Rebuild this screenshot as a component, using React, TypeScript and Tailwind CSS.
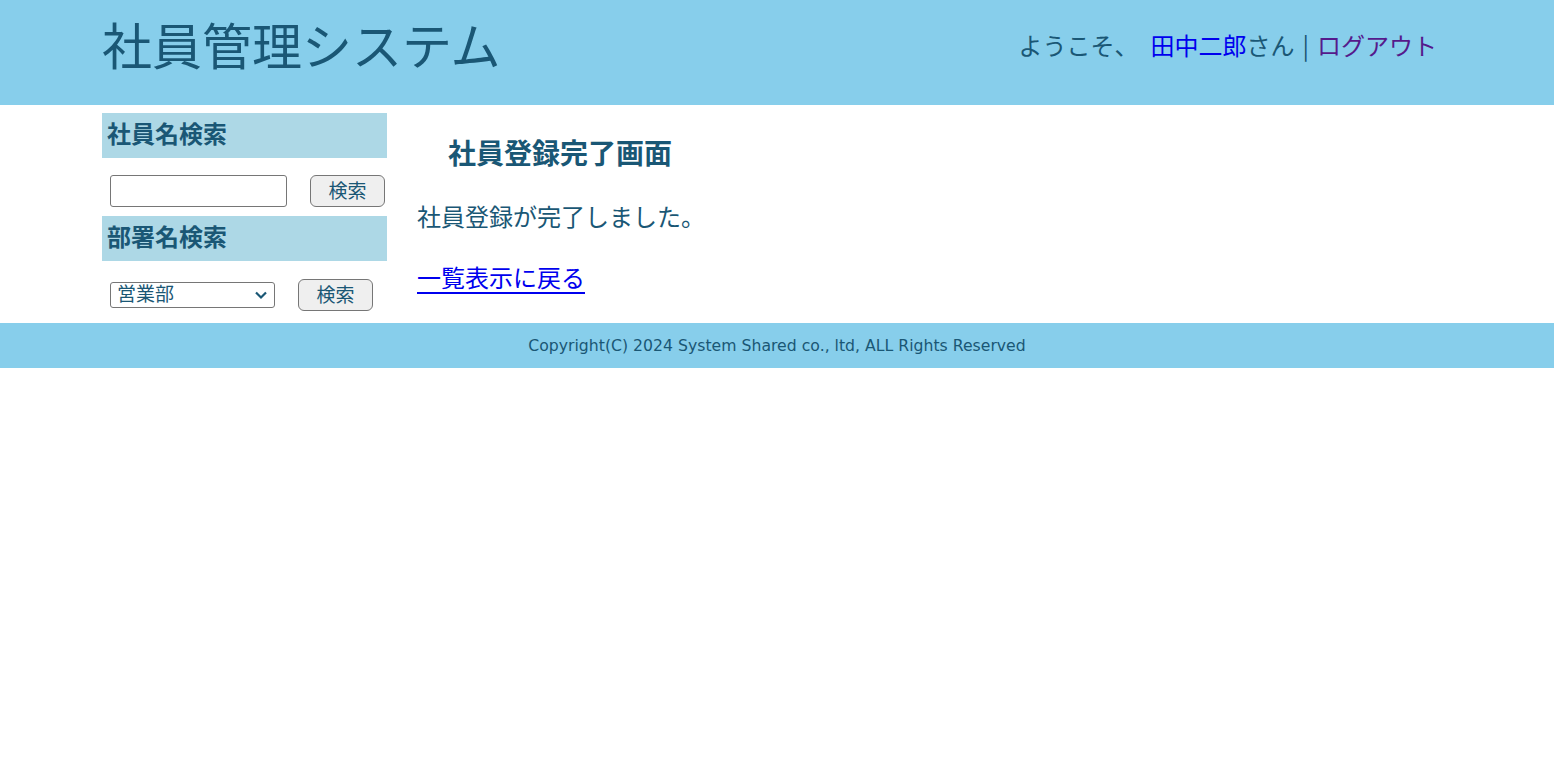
import React from "react";

const font = { fontFamily: '"Noto Sans CJK JP", "Noto Sans", sans-serif' };

export default function App() {
  return (
    <div className="min-h-[771px] bg-white text-[#1a5775]" style={font}>
      <header className="h-[105px] bg-[#87ceeb]">
        <div className="mx-auto flex h-full w-[1350px] items-start justify-between pr-[15px]">
          <h1 className="mt-[11px] text-[50px] font-normal leading-[64px]">社員管理システム</h1>
          <div className="mt-[28px] text-[24px] leading-[34px]">
            <span>ようこそ、</span>
            <span className="ml-[12px]"><a href="#" className="text-[#0000ee]">田中二郎</a>さん</span>
            <span className="mx-[8px]">|</span>
            <a href="#" className="text-[#551a8b]">ログアウト</a>
          </div>
        </div>
      </header>
      <div className="mx-auto flex w-[1350px] pt-[8px]">
        <aside className="w-[285px] shrink-0 pb-[12px]">
          <div className="flex h-[45px] items-center bg-[#add8e6] pb-[5px] pl-[5px] text-[24px] font-bold">社員名検索</div>
          <div className="flex items-center pl-[8px] pt-[17px] pb-[9px]">
            <input type="text" className="h-[32px] w-[177px] rounded-[3px] border border-[#767676] bg-white px-1" />
            <button className="ml-[23px] h-[32px] w-[75px] rounded-[6px] border border-[#767676] bg-[#efefef] pb-[3px] text-[19px] leading-none">検索</button>
          </div>
          <div className="flex h-[45px] items-center bg-[#add8e6] pb-[5px] pl-[5px] text-[24px] font-bold">部署名検索</div>
          <div className="flex items-center pl-[8px] pt-[18px]">
            <div className="relative h-[26px] w-[165px] rounded-[3px] border border-[#767676] bg-white">
              <span className="absolute left-[6px] top-[-4px] text-[19px] leading-[28px]">営業部</span>
              <svg className="absolute right-[6px] top-[7px]" width="14" height="10" viewBox="0 0 14 10">
                <path d="M2 2.5 L7 7.5 L12 2.5" fill="none" stroke="#1a5775" strokeWidth="2.2" />
              </svg>
            </div>
            <button className="ml-[23px] h-[32px] w-[75px] rounded-[6px] border border-[#767676] bg-[#efefef] pb-[3px] text-[19px] leading-none">検索</button>
          </div>
        </aside>
        <main className="pl-[30px]">
          <h2 className="mt-[19px] pl-[31px] text-[28px] font-bold leading-[40px]">社員登録完了画面</h2>
          <p className="mt-[29px] text-[24px] leading-[30px]">社員登録が完了しました。</p>
          <a href="#" className="mt-[31px] block text-[24px] leading-[30px] text-[#0000ee] underline underline-offset-[5px]">一覧表示に戻る</a>
        </main>
      </div>
      <footer className="flex h-[45px] items-center justify-center bg-[#87ceeb]" style={{ fontFamily: '"DejaVu Sans", sans-serif' }}>
        <span className="text-[15.7px]">Copyright(C) 2024 System Shared co., ltd, ALL Rights Reserved</span>
      </footer>
    </div>
  );
}
